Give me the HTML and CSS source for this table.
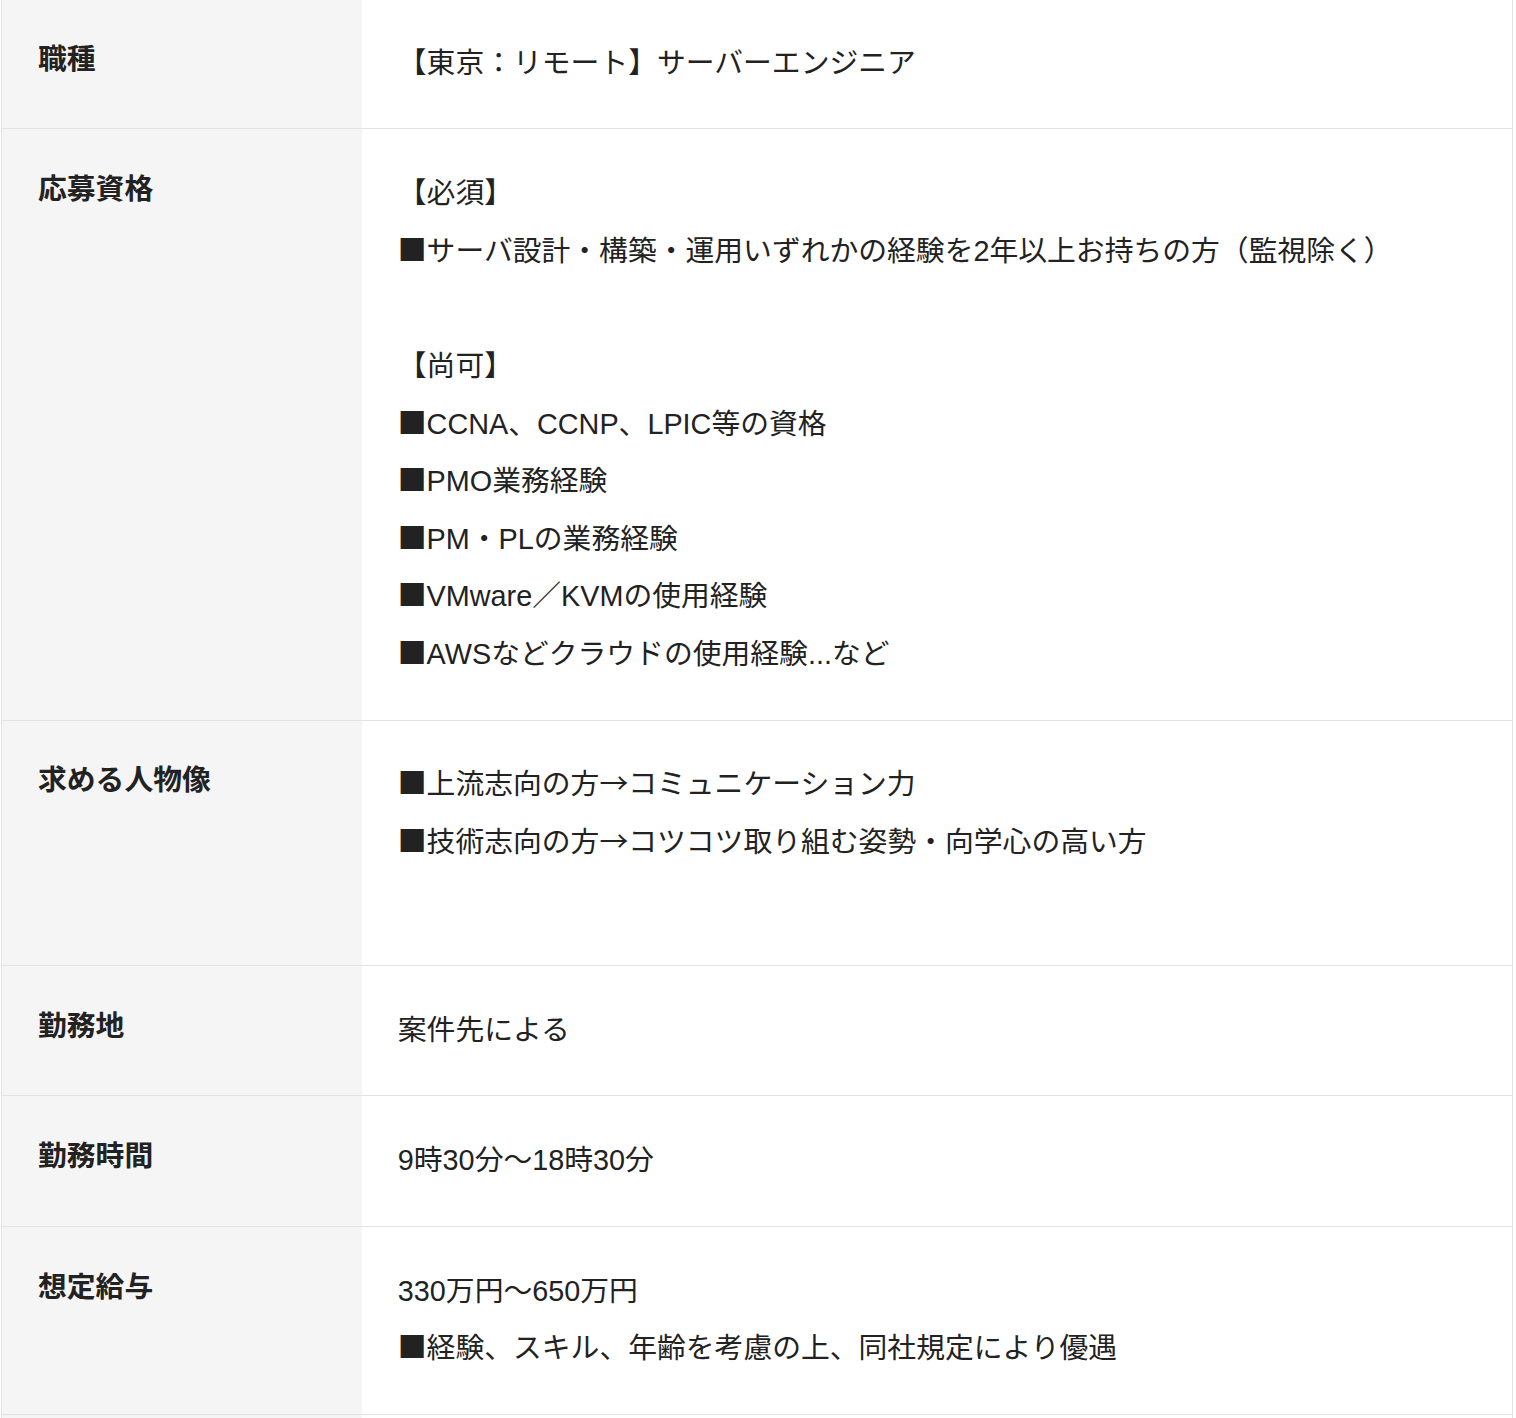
FILE: index.html
```html
<!DOCTYPE html>
<html lang="ja">
<head>
<meta charset="utf-8">
<title>募集要項</title>
<link rel="stylesheet" href="styles.css">
</head>
<body>
<div class="frame">
  <div class="spec">
    <div class="row">
      <div class="label">職種</div>
      <div class="value">【東京：リモート】サーバーエンジニア</div>
    </div>
    <div class="row">
      <div class="label">応募資格</div>
      <div class="value">【必須】<br><span class="ja">■</span>サーバ設計・構築・運用いずれかの経験を2年以上お持ちの方（監視除く）<br><br>【尚可】<br><span class="ja">■</span>CCNA、CCNP、LPIC等の資格<br><span class="ja">■</span>PMO業務経験<br><span class="ja">■</span>PM・PLの業務経験<br><span class="ja">■</span>VMware／KVMの使用経験<br><span class="ja">■</span>AWSなどクラウドの使用経験...など</div>
    </div>
    <div class="row">
      <div class="label">求める人物像</div>
      <div class="value"><span class="ja">■</span>上流志向の方<span class="ja">→</span>コミュニケーション力<br><span class="ja">■</span>技術志向の方<span class="ja">→</span>コツコツ取り組む姿勢・向学心の高い方<br><br></div>
    </div>
    <div class="row">
      <div class="label">勤務地</div>
      <div class="value">案件先による</div>
    </div>
    <div class="row">
      <div class="label">勤務時間</div>
      <div class="value">9時30分〜18時30分</div>
    </div>
    <div class="row">
      <div class="label">想定給与</div>
      <div class="value">330万円〜650万円<br><span class="ja">■</span>経験、スキル、年齢を考慮の上、同社規定により優遇</div>
    </div>
    <div class="row">
      <div class="label">&nbsp;</div>
      <div class="value">&nbsp;</div>
    </div>
  </div>
</div>
</body>
</html>
```

FILE: styles.css
```css
html, body {
  margin: 0;
  padding: 0;
  background: #ffffff;
}

body {
  font-family: "Noto Sans CJK JP", "Noto Sans", sans-serif;
  color: #222222;
  font-size: 28.8px;
}

.frame {
  height: 1418px;
  overflow: hidden;
}

.spec {
  width: 1512px;
  margin: -1px 0 0 1px;
  box-sizing: border-box;
  border-left: 1px solid #e2e2e2;
  border-right: 1px solid #e2e2e2;
}

.row {
  display: grid;
  grid-template-columns: 360px 1fr;
  border-bottom: 1px solid #e2e2e2;
}

.label {
  background: #f4f5f4;
  padding: 35.9px 36px;
  font-weight: 700;
  line-height: 1.5;
}

.value {
  padding: 35.9px 35.8px;
  line-height: 2;
  font-family: "Liberation Sans", "Noto Sans CJK JP", sans-serif;
}

.ja {
  font-family: "Noto Sans CJK JP", sans-serif;
  line-height: 1;
}
```
